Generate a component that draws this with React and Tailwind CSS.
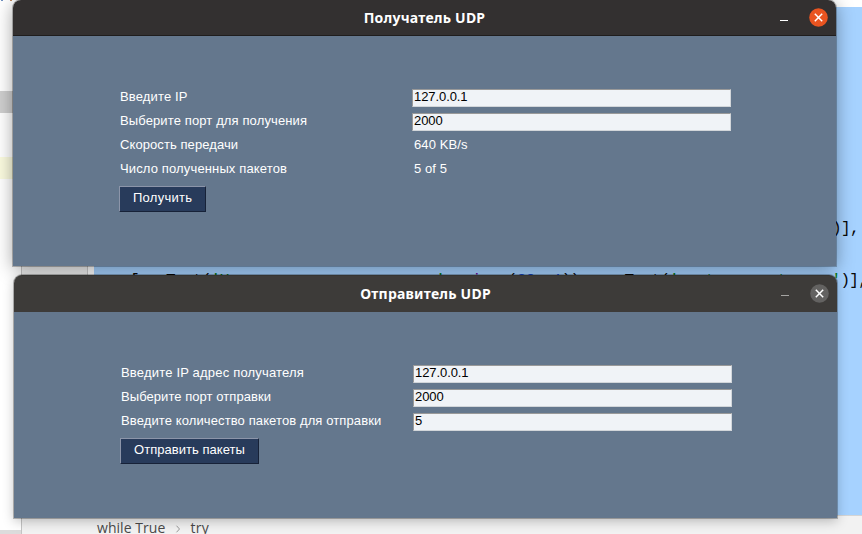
import React from "react";

const SANS = "font-['Liberation_Sans',sans-serif]";

function Editor() {
  return (
    <div className="flex h-[534px] w-[862px] overflow-hidden bg-white">
      <div className="flex w-[21px] shrink-0 flex-col bg-white">
        <div className="flex h-[1px] gap-[7px] pl-[1px]">
          <span className="w-[2px] bg-[#6f8fc0]" />
          <span className="w-[2px] bg-[#c08a60]" />
        </div>
        <div className="mt-[90px] h-[22px] bg-[#cfcfcf]" />
        <div className="mt-[44px] h-[22px] bg-[#fbfbdf]" />
        <div className="mt-auto h-[4px] bg-[#dcdcdc]" />
      </div>
      <div className="flex min-w-0 grow flex-col border-l border-[#c4c4c4]">
        <div className="flex h-[515px] shrink-0">
          <div className="w-[66px] shrink-0 border-r border-[#c9c9c9] bg-[#f0f0f0]" />
          <div className="w-[6px] shrink-0 bg-white" />
          <div className="flex min-w-0 grow flex-col">
            <div className="h-[7px] shrink-0 bg-white" />
            <div className="grow overflow-hidden bg-[#a6d2ff] pl-[36px] pt-[209px] font-['Liberation_Mono',monospace] text-[16px] leading-[26px] tracking-[-0.61px] whitespace-pre text-[#080808]">
              <div className="h-[26px] pl-[702px]">)],</div>
              <div className="mt-[26px] h-[26px]">
                [sg.Text(<span className="text-[#067d17]">'Число полученных пакетов'</span>, <span className="text-[#660099]">size</span>=(<span className="text-[#1750eb]">30</span>, <span className="text-[#1750eb]">1</span>)), sg.Text(<span className="text-[#067d17]">'port_correct_area'</span>)],
              </div>
            </div>
          </div>
        </div>
        <div className="flex h-[19px] shrink-0 items-start gap-[10px] overflow-hidden border-t border-[#d4d4d4] bg-[#f2f2f2] pl-[75px] pt-[1px] font-['Open_Sans',sans-serif] text-[14px] leading-[22px] text-[#4a4a4a]">
          <span className="tracking-[0.05px]">while True</span>
          <svg className="mt-[8px] h-[8px] w-[6px]" viewBox="0 0 6 8" fill="none" stroke="#999">
            <path d="M1.5 .7 4.5 4 1.5 7.3" />
          </svg>
          <span className="-ml-[1px] tracking-[0.3px]">try</span>
        </div>
      </div>
    </div>
  );
}

function TitleBar({ title, active }) {
  return (
    <div
      className={
        "flex shrink-0 items-center rounded-t-[8px] " +
        (active
          ? "h-[36px] border-b border-[#1f1d1d] bg-[#333030]"
          : "h-[37px] border-t border-[#353431] bg-[#3d3b39]")
      }
    >
      <div className="w-[60px]" />
      <div className="grow text-center font-['Noto_Sans',sans-serif] text-[14px] leading-[20px] font-bold tracking-[0.22px] text-white">
        {title}
      </div>
      <div className="flex w-[60px] items-center justify-end gap-[21px] pr-[8px]">
        <span className={active ? "mt-[5px] h-[1px] w-[8px] bg-white" : "mt-[3px] h-[1px] w-[8px] bg-[#a5a4a2]"} />
        <svg
          className={"h-[19px] w-[19px] " + (active ? "-mt-[1px]" : "-mt-[2px]")}
          viewBox="0 0 19 19"
        >
          <circle cx="9.5" cy="9.5" r="9.3" fill={active ? "#e95420" : "#636261"} />
          <path d="M5.8 5.8 13.2 13.2M13.2 5.8 5.8 13.2" stroke="#fff" strokeWidth="1.5" />
        </svg>
      </div>
    </div>
  );
}

function Row({ label, tracking, children }) {
  return (
    <div className="flex h-[24px] items-start">
      <div className={"w-[293px] shrink-0 pl-px leading-[16px] whitespace-nowrap " + tracking}>{label}</div>
      {children}
    </div>
  );
}

function Field({ value }) {
  return (
    <div className="h-[18px] w-[319px] border border-t-[#999] border-l-[#999] border-r-[#d2d6da] border-b-[#d2d6da] bg-[#f0f3f7] pl-px leading-[14px] tracking-[-0.08px] text-black">
      {value}
    </div>
  );
}

function Value({ children }) {
  return <div className="pl-[2px] leading-[16px] tracking-[0.1px]">{children}</div>;
}

function Button({ children, className }) {
  return (
    <div className={"mt-px h-[26px] border border-t-[#8c95a9] border-l-[#8c95a9] border-r-[#172238] border-b-[#172238] bg-[#283b5b] pl-[13px] leading-[22px] whitespace-nowrap " + className}>
      {children}
    </div>
  );
}

export default function App() {
  return (
    <div className="relative h-[534px] w-[862px] overflow-hidden">
      <Editor />

      <div className="absolute top-0 left-[13px] flex h-[266px] w-[823px] flex-col rounded-t-[8px] shadow-[0_0_0_1px_rgba(0,0,0,0.25),0_3px_18px_rgba(0,0,0,0.38)]">
        <TitleBar title="Получатель UDP" active />
        <div className={"grow bg-[#64778d] pt-[53px] pl-[106px] text-[13px] text-white " + SANS}>
          <Row label="Введите IP" tracking="tracking-[0.15px]"><Field value="127.0.0.1" /></Row>
          <Row label="Выберите порт для получения" tracking="tracking-[0.12px]"><Field value="2000" /></Row>
          <Row label="Скорость передачи" tracking="tracking-[0.08px]"><Value>640 KB/s</Value></Row>
          <Row label="Число полученных пакетов" tracking="tracking-[0.14px]"><Value>5 of 5</Value></Row>
          <Button className="w-[87px] tracking-[0.27px]">Получить</Button>
        </div>
      </div>

      <div className="absolute top-[275px] left-[14px] flex h-[243px] w-[823px] flex-col rounded-t-[8px] shadow-[0_0_0_1px_rgba(0,0,0,0.25),0_3px_12px_rgba(0,0,0,0.25)]">
        <TitleBar title="Отправитель UDP" />
        <div className={"grow bg-[#64778d] pt-[53px] pl-[106px] text-[13px] text-white " + SANS}>
          <Row label="Введите IP адрес получателя" tracking="tracking-[0.19px]"><Field value="127.0.0.1" /></Row>
          <Row label="Выберите порт отправки" tracking="tracking-[0.06px]"><Field value="2000" /></Row>
          <Row label="Введите количество пакетов для отправки" tracking="tracking-[0.11px]"><Field value="5" /></Row>
          <Button className="w-[139px] tracking-[0.04px]">Отправить пакеты</Button>
        </div>
      </div>
    </div>
  );
}
